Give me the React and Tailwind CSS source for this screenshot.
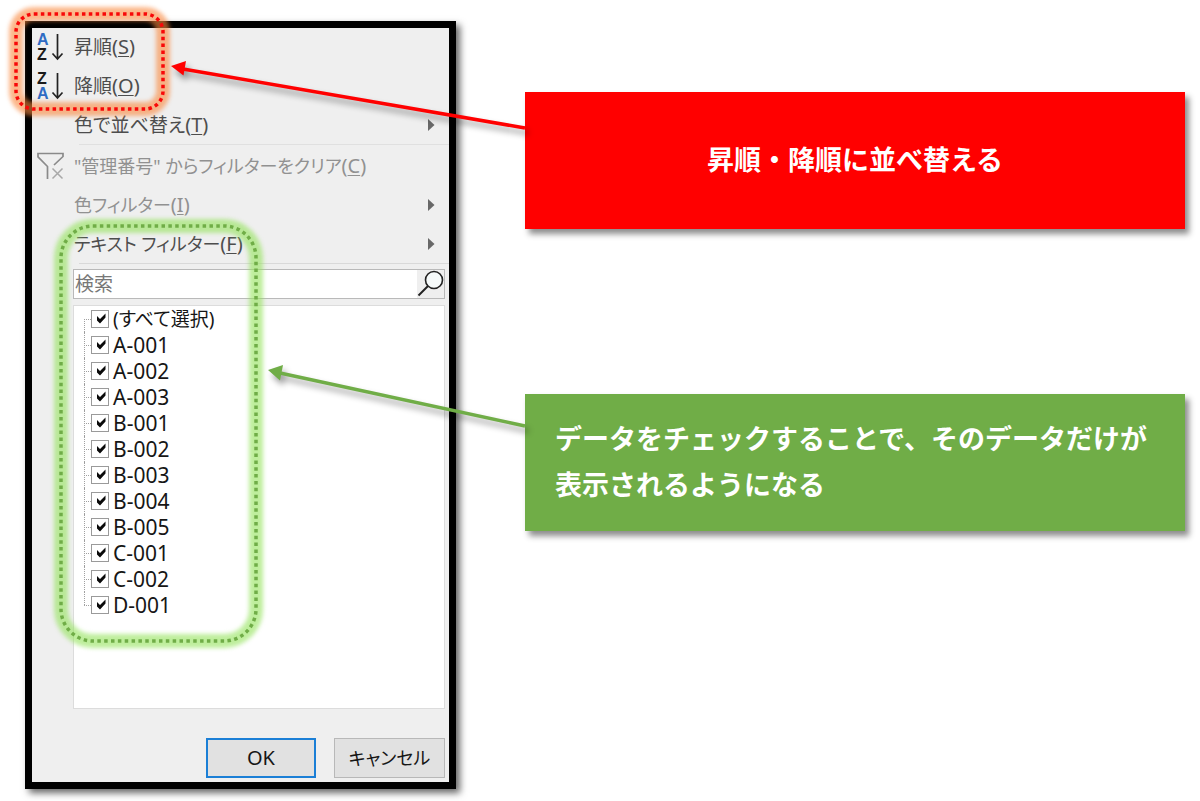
import React from 'react';

const items = [
  '(すべて選択)',
  'A-001',
  'A-002',
  'A-003',
  'B-001',
  'B-002',
  'B-003',
  'B-004',
  'B-005',
  'C-001',
  'C-002',
  'D-001',
];

function SortIcon({ desc = false }) {
  return (
    <span className="flex h-8 items-center font-['Liberation_Sans',sans-serif] text-[16px] font-bold leading-[15px]">
      <span className={desc ? 'flex w-[14px] flex-col-reverse' : 'flex w-[14px] flex-col'}>
        <span className="text-[#2f6cc4]">A</span>
        <span className="text-[#1a1a1a]">Z</span>
      </span>
      <svg width="13" height="28" viewBox="0 0 13 28" fill="none" stroke="#222" strokeWidth="1.700">
        <path d="M6.500 1V26M1.500 20.500l5 5.500 5-5.500" />
      </svg>
    </span>
  );
}

function ClearFilterIcon() {
  return (
    <svg width="27" height="28" viewBox="0 0 27 28" fill="none" stroke="#8a8a8a">
      <path d="M10.500 27V14.500L1 4.800V1.500H26V4.500L17 13" strokeWidth="1.700" />
      <path d="M15.500 16.500l10 10M25.500 16.500l-10 10" stroke="#a8a8a8" strokeWidth="1.500" />
    </svg>
  );
}

function MenuItem({ icon, label, accel, submenu, muted }) {
  return (
    <button type="button" className="flex h-[38px] w-full items-center gap-[10px] pl-[5px] pr-[14px] text-left">
      <span className="w-[27px] shrink-0">{icon}</span>
      <span className={muted ? 'flex-1 text-[#919191]' : 'flex-1 text-[#4d4d4d]'}>
        {label}
        <span className="text-[20px]">
          (<u className="underline decoration-1 underline-offset-2">{accel}</u>)
        </span>
      </span>
      {submenu && (
        <svg width="7" height="12" viewBox="0 0 7 12">
          <path d="M0 0l6.500 6L0 12z" fill="#686868" />
        </svg>
      )}
    </button>
  );
}

function TreeItem({ label, first, last }) {
  return (
    <li className="relative flex h-[26px] items-center pl-[17px]">
      {/* tree guides */}
      <span
        className={
          'absolute left-[10px] border-l border-dotted border-[#a0a0a0] ' +
          (first ? 'top-1/2 bottom-0' : last ? 'top-0 bottom-1/2' : 'top-0 bottom-0')
        }
      />
      <span className="absolute left-[10px] top-1/2 w-[7px] border-t border-dotted border-[#a0a0a0]" />
      <label className="flex items-center gap-1 text-[21px] leading-[26px] text-[#161616]">
        <span className="relative h-[18px] w-[18px] shrink-0">
          <input
            type="checkbox"
            defaultChecked
            className="peer block h-[18px] w-[18px] appearance-none border border-[#9a9a9a] bg-white"
          />
          <svg
            viewBox="0 0 18 18"
            className="pointer-events-none absolute inset-0 hidden h-[18px] w-[18px] peer-checked:block"
          >
            <path d="M6 6L9 9L14.500 3.500V7.500L9 13.500L6 10.500z" fill="#0a0a0a" />
          </svg>
        </span>
        <span className={first ? 'text-[19px]' : ''}>{label}</span>
      </label>
    </li>
  );
}

function Highlight({ width, height, radius, color, glow, className }) {
  const box = { x: 10, y: 10, width: width - 20, height: height - 20, rx: radius, fill: 'none' };
  return (
    <svg width={width} height={height} className={'pointer-events-none absolute overflow-visible ' + className}>
      <rect {...box} stroke={glow} strokeWidth="14" className="blur-[2px]" />
      <rect {...box} stroke={color} strokeWidth="3.500" strokeDasharray="3.500 3.350" />
    </svg>
  );
}

function Arrow({ width, height, line, head, color }) {
  return (
    <svg
      width={width}
      height={height}
      className="pointer-events-none absolute right-full top-0 overflow-visible drop-shadow-[3px_5px_3px_rgba(0,0,0,0.4)]"
    >
      <path d={line} stroke={color} strokeWidth="3.500" />
      <path d={head} fill={color} />
    </svg>
  );
}

function FilterMenu() {
  return (
    <section className="relative flex w-[431px] shrink-0 flex-col border-[7px] border-black bg-[#efefef] pb-1 leading-[26px] shadow-[4px_4px_7px_rgba(0,0,0,0.6)]">
      <div className="flex flex-col gap-px text-[19px]">
        <MenuItem icon={<SortIcon />} label="昇順" accel="S" />
        <MenuItem icon={<SortIcon desc />} label="降順" accel="O" />
        <MenuItem label="色で並べ替え" accel="T" submenu />
      </div>
      <hr className="mb-[2px] ml-[47px] border-[#e0e0e0]" />
      <div className="flex flex-col gap-px text-[18px]">
        <MenuItem icon={<ClearFilterIcon />} label={'"管理番号" からフィルターをクリア'} accel="C" muted />
        <MenuItem label="色フィルター" accel="I" submenu muted />
        <MenuItem label="テキスト フィルター" accel="F" submenu />
      </div>
      <hr className="ml-[47px] border-[#d9d9d9]" />

      <div className="ml-[41px] mr-1 mt-[5px] flex h-[30px] border border-[#b9b9b9] bg-white">
        <input
          type="text"
          aria-label="検索"
          placeholder="検索"
          className="min-w-0 flex-1 pl-px text-[19px] text-[#333] outline-none placeholder:text-[#777]"
        />
        <button type="button" aria-label="検索" className="w-[27px] bg-[#efefef]">
          <svg width="27" height="28" viewBox="0 0 27 28" fill="none" stroke="#222" strokeWidth="1.600">
            <circle cx="17" cy="10" r="8.500" fill="#f6fafa" />
            <path d="M11 16L1.500 25.500" strokeWidth="2" />
          </svg>
        </button>
      </div>

      <ul className="ml-[41px] mr-1 mt-[6px] min-h-[404px] border border-[#dcdcdc] bg-white">
        {items.map((label, i) => (
          <TreeItem key={label} label={label} first={i === 0} last={i === items.length - 1} />
        ))}
      </ul>

      <div className="mr-1 mt-[29px] flex justify-end gap-[18px] text-[#161616]">
        <button type="button" className="h-10 w-[110px] border-2 border-[#1b7fd6] bg-[#e1e1e1] text-[20px]">
          OK
        </button>
        <button type="button" className="h-10 w-[111px] border border-[#b8b8b8] bg-[#e1e1e1] text-[18px]">
          キャンセル
        </button>
      </div>

      <Highlight width={167} height={115} radius={18} color="#f80808" glow="rgba(250,135,60,0.6)" className="-left-[26px] -top-6" />
      <Highlight width={215} height={435} radius={32} color="#70ad47" glow="rgba(146,226,90,0.6)" className="left-[19px] top-[188px]" />
    </section>
  );
}

export default function App() {
  return (
    <main className="flex items-start gap-[69px] bg-white pb-3 pl-[25px] pr-[15px] pt-[21px] font-['Noto_Sans','Noto_Sans_CJK_JP',sans-serif] [font-feature-settings:'palt']">
      <FilterMenu />
      <div className="flex flex-1 flex-col gap-[165px] pt-[71px] font-['Noto_Sans_CJK_JP',sans-serif] text-[27px] font-bold leading-[46px] text-white [font-feature-settings:normal]">
        <div className="relative flex min-h-[137px] items-center justify-center bg-[#ff0000] px-[30px] pb-[3px] shadow-[4px_5px_6px_rgba(0,0,0,0.45)]">
          <Arrow
            width={354}
            height={62}
            line="M354 36L12 -23"
            head="M0 -26L15 -31L12.500 -16.500z"
            color="#ff0000"
          />
          <p>昇順・降順に並べ替える</p>
        </div>
        <div className="relative flex min-h-[137px] items-center bg-[#70ad47] px-[30px] pb-[3px] shadow-[4px_5px_6px_rgba(0,0,0,0.45)]">
          <Arrow
            width={257}
            height={57}
            line="M257 32L12 -21"
            head="M0 -24L15 -29L12 -13.500z"
            color="#70ad47"
          />
          <p>データをチェックすることで、そのデータだけが表示されるようになる</p>
        </div>
      </div>
    </main>
  );
}
